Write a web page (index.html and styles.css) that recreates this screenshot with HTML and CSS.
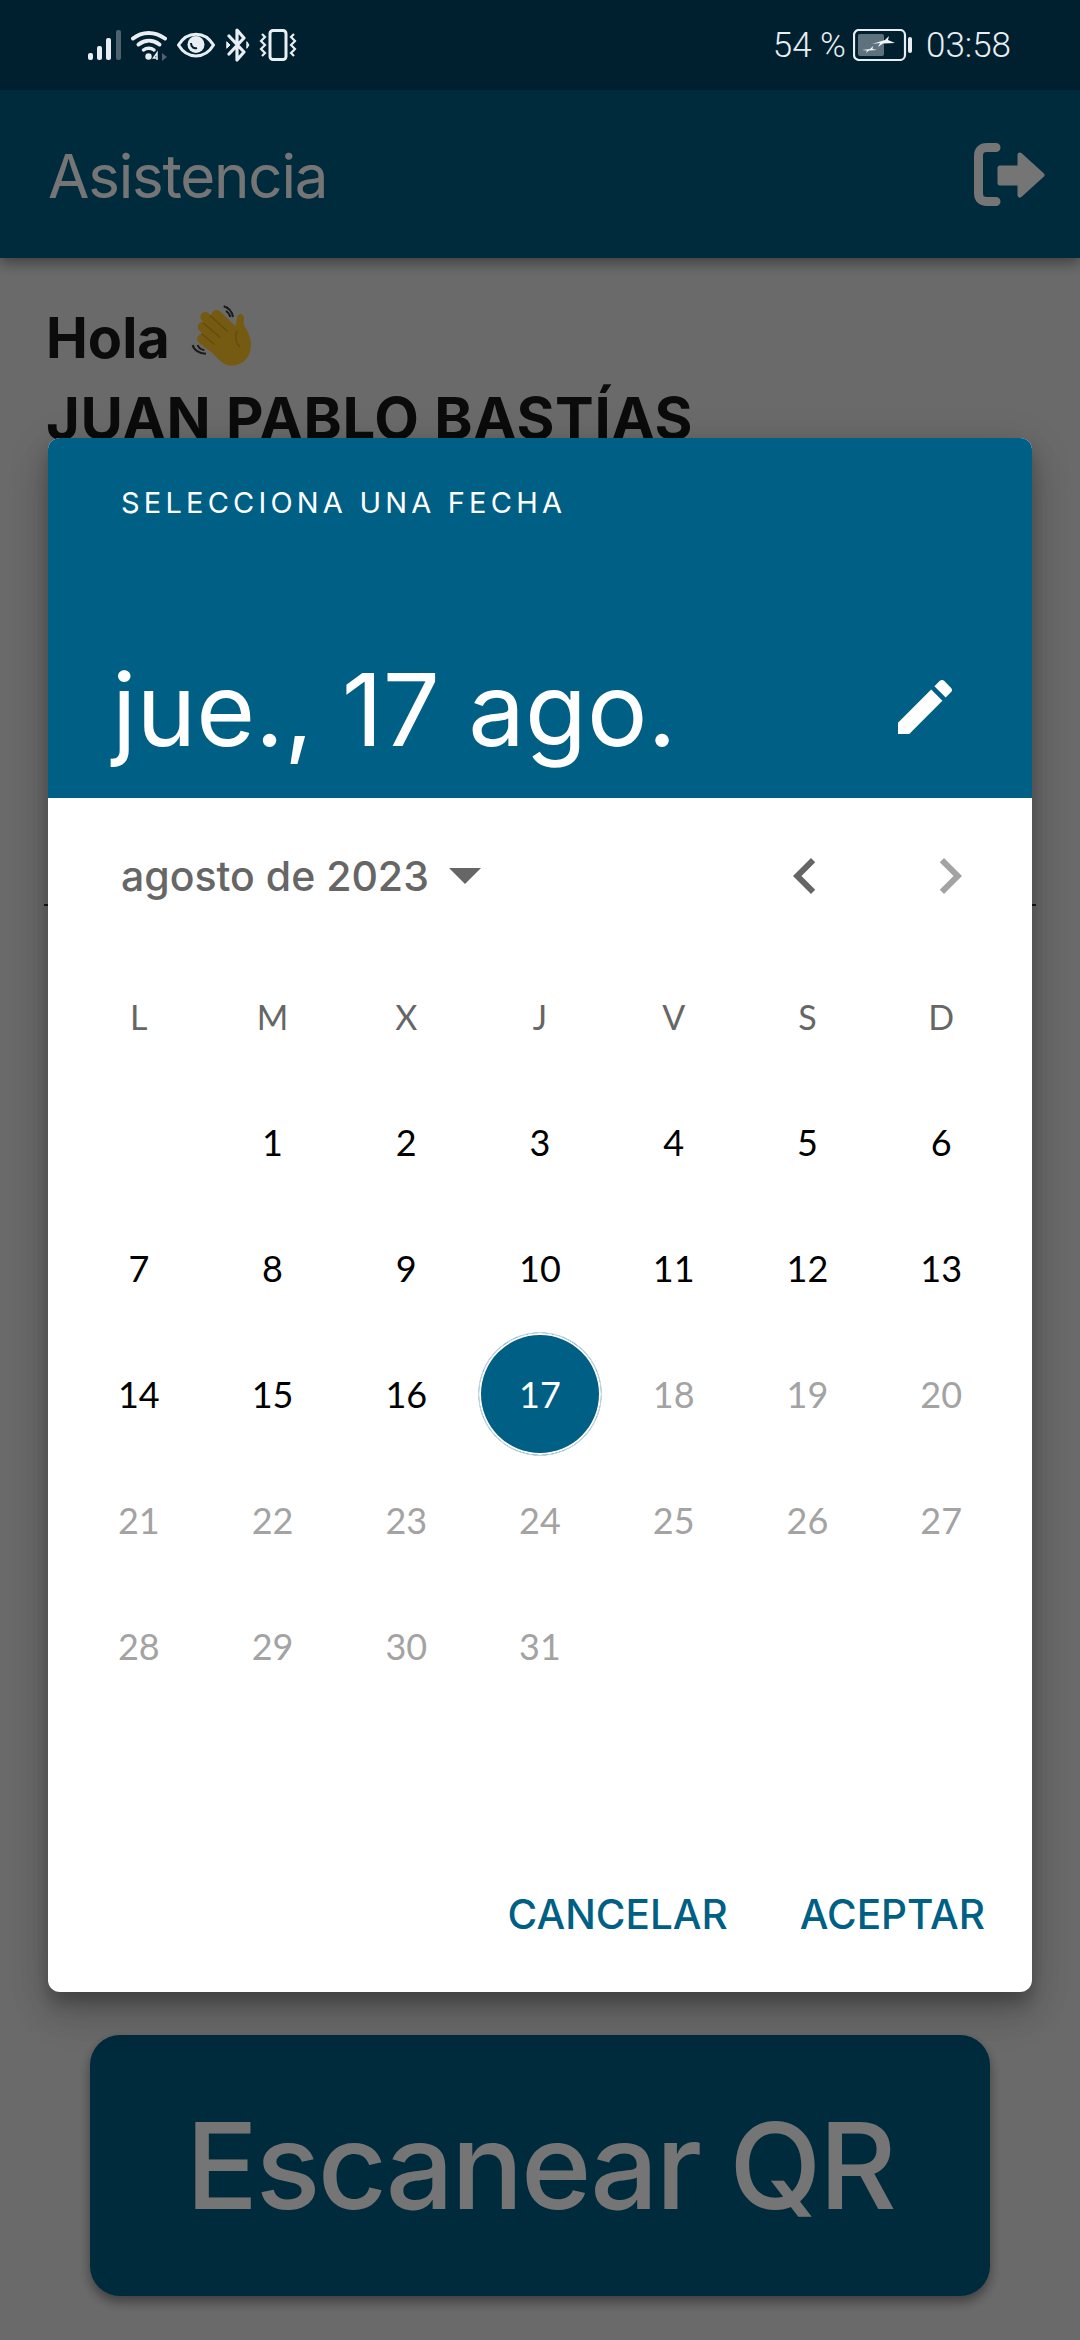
FILE: index.html
```html
<!DOCTYPE html>
<html lang="es">
<head>
  <meta charset="UTF-8">
  <title>Asistencia</title>
  <link rel="stylesheet" href="styles.css">
</head>
<body>
  <div class="screen">
    <div class="status-bar">
      <div class="status-left">
        <svg class="ico-signal" viewBox="0 0 34 30" width="34" height="30">
          <rect x="0" y="23" width="5" height="7" rx="2" fill="#e8eef1"/>
          <rect x="9" y="16" width="5" height="14" rx="2" fill="#e8eef1"/>
          <rect x="18" y="8" width="5" height="22" rx="2" fill="#e8eef1"/>
          <rect x="28" y="0" width="5" height="30" rx="2" fill="#4d626d"/>
        </svg>
        <svg class="ico-wifi" viewBox="0 0 36 32" width="36" height="32" fill="none">
          <path d="M2 9.500C11 2 24 2 34 9.500" stroke="#e8eef1" stroke-width="4" stroke-linecap="round"/>
          <path d="M7.500 15.500C14 10.500 22 10.500 28.500 15.500" stroke="#e8eef1" stroke-width="4" stroke-linecap="round"/>
          <path d="M12.500 21C15.500 18.500 20 18.500 23 21" stroke="#e8eef1" stroke-width="3.500" stroke-linecap="round"/>
          <circle cx="17.500" cy="27.500" r="3.200" fill="#e8eef1"/>
          <path d="M26 24l-3.500 5h3.500zM26 24v7" stroke="#e8eef1" stroke-width="1.500"/>
          <path d="M31 24v8l5-4z" fill="#4d626d"/>
        </svg>
        <svg class="ico-eye" viewBox="0 0 38 26" width="38" height="26">
          <path d="M1.500 13C10 -1.500 28 -1.500 36.500 13C28 27.500 10 27.500 1.500 13Z" fill="none" stroke="#e8eef1" stroke-width="3"/>
          <circle cx="19" cy="12.500" r="8.500" fill="#e8eef1"/>
          <path d="M14 11c0 4 3 6 6 5" fill="none" stroke="#00202f" stroke-width="2"/>
        </svg>
        <svg class="ico-bt" viewBox="0 0 24 34" width="24" height="34" fill="none" stroke="#e8eef1" stroke-width="3.200" stroke-linejoin="round" stroke-linecap="round">
          <path d="M3 8L18 24L11 32V2L18 10L3 26"/>
          <path d="M21 14l2 3-2 3z" fill="#e8eef1" stroke-width="1"/>
          <path d="M1 14l3 3-3 3z" fill="#e8eef1" stroke-width="1"/>
        </svg>
        <svg class="ico-vibrate" viewBox="0 0 38 32" width="38" height="32" fill="none" stroke="#e8eef1">
          <rect x="11" y="1.500" width="16" height="29" rx="3" stroke-width="3"/>
          <path d="M3 5l3 3-4 4 4 4-4 4 4 4-3 3" stroke-width="2.200"/>
          <path d="M35 5l-3 3 4 4-4 4 4 4-4 4 3 3" stroke-width="2.200"/>
        </svg>
      </div>
      <div class="status-right">
        <span class="status-text">54 %</span>
        <svg class="ico-battery" viewBox="0 0 60 32" width="60" height="32">
          <rect x="1" y="1" width="51" height="30" rx="5" fill="none" stroke="#e8eef1" stroke-width="2.200"/>
          <rect x="5" y="5" width="26" height="22" rx="2" fill="#5e727d"/>
          <rect x="55" y="8" width="4" height="16" rx="2" fill="#e8eef1"/>
          <path d="M19 15L32 11L36 7L35 11L42 14L30 14.500L25 18L27 14Z" fill="#f2f5f6"/>
          <path d="M9 21L17 20L20 17L19.500 20L24 21L16 21.500L13 24L14 21.500Z" fill="#f2f5f6"/>
        </svg>
        <span class="status-text">03:58</span>
      </div>
    </div>

    <header class="app-bar">
      <h1 class="app-title">Asistencia</h1>
      <svg class="logout" viewBox="0 0 72 63" width="72" height="63">
        <path d="M22 4.500H13Q4.500 4.500 4.500 13V50Q4.500 58.500 13 58.500H22" fill="none" stroke="#fff" stroke-width="9" stroke-linecap="round"/>
        <path d="M26 25H46V12L68 32L46 52V40H26Z" fill="#fff" stroke="#fff" stroke-width="5" stroke-linejoin="round"/>
      </svg>
    </header>

    <main class="content">
      <div class="greeting">
        <div class="hello">Hola
          <svg class="wave" viewBox="0 0 270 240" width="90" height="80">
            <g fill="none" stroke="#ffc427" stroke-width="30" stroke-linecap="round">
              <path d="M103 66L170 125"/>
              <path d="M136 60L195 115"/>
              <path d="M95 96L160 150"/>
              <path d="M93 132L150 175"/>
            </g>
            <path d="M190 110L198 70C200 52 218 54 219 70L218 88C232 112 244 136 239 163C234 194 208 214 178 212C150 208 130 180 110 155L160 90Z" fill="#ffc427"/>
            <g fill="none" stroke="#d9a21f" stroke-width="4" stroke-linecap="round">
              <path d="M118 62L168 108"/>
              <path d="M97 84L146 126"/>
              <path d="M92 116L130 148"/>
              <path d="M198 108C190 125 195 145 206 155"/>
            </g>
            <path d="M158 34C172 38 183 50 186 66M165 48C172 52 176 58 178 66" fill="none" stroke="#3a3a3a" stroke-width="6"/>
            <path d="M65 150C68 164 84 176 105 176M80 150C83 158 90 164 100 165" fill="none" stroke="#3a3a3a" stroke-width="6"/>
          </svg>
        </div>
        <div class="student-name">JUAN PABLO BASTÍAS</div>
      </div>
      <hr class="divider">
      <button class="scan-btn" type="button">Escanear QR</button>
    </main>

    <div class="scrim"></div>

    <section class="dialog">
      <div class="dialog-head">
        <div class="dialog-label">SELECCIONA UNA FECHA</div>
        <div class="dialog-date-row">
          <div class="dialog-date">jue., 17 ago.</div>
          <svg class="edit" viewBox="0 0 24 24" width="72" height="72">
            <path fill="#fff" d="M3 17.250V21h3.750L17.810 9.940l-3.750-3.750L3 17.250zM20.710 7.040c.39-.39.39-1.020 0-1.410l-2.340-2.340c-.39-.39-1.020-.39-1.410 0l-1.830 1.830 3.750 3.750 1.830-1.830z"/>
          </svg>
        </div>
      </div>

      <div class="month-row">
        <span class="month-name">agosto de 2023</span>
        <svg class="month-caret" viewBox="0 0 32 16" width="32" height="16"><path d="M0 0h32L16 16z" fill="#666"/></svg>
        <div class="month-nav">
          <svg viewBox="0 0 24 24" width="72" height="72"><path fill="#666" d="M15.410 7.410L14 6l-6 6 6 6 1.410-1.410L10.830 12z"/></svg>
          <svg viewBox="0 0 24 24" width="72" height="72"><path fill="#a3a3a3" d="M8.590 16.590L10 18l6-6-6-6-1.410 1.410L13.170 12z"/></svg>
        </div>
      </div>

      <div class="calendar">
        <span class="wd">L</span><span class="wd">M</span><span class="wd">X</span><span class="wd">J</span><span class="wd">V</span><span class="wd">S</span><span class="wd">D</span>
        <span class="day"></span><span class="day">1</span><span class="day">2</span><span class="day">3</span><span class="day">4</span><span class="day">5</span><span class="day">6</span>
        <span class="day">7</span><span class="day">8</span><span class="day">9</span><span class="day">10</span><span class="day">11</span><span class="day">12</span><span class="day">13</span>
        <span class="day">14</span><span class="day">15</span><span class="day">16</span><span class="day selected"><b>17</b></span><span class="day off">18</span><span class="day off">19</span><span class="day off">20</span>
        <span class="day off">21</span><span class="day off">22</span><span class="day off">23</span><span class="day off">24</span><span class="day off">25</span><span class="day off">26</span><span class="day off">27</span>
        <span class="day off">28</span><span class="day off">29</span><span class="day off">30</span><span class="day off">31</span>
      </div>

      <div class="dialog-actions">
        <button class="text-btn" type="button">CANCELAR</button>
        <button class="text-btn" type="button">ACEPTAR</button>
      </div>
    </section>
  </div>
</body>
</html>
```

FILE: styles.css
```css
* {
  box-sizing: border-box;
}
html, body {
  margin: 0;
  padding: 0;
}
body {
  font-family: Inter, "Noto Sans", sans-serif;
  background: #e8e8e8;
}
.screen {
  position: relative;
  width: 1080px;
  height: 2340px;
  display: flex;
  flex-direction: column;
  overflow: hidden;
}

/* status bar sits over the scrim */
.status-bar {
  position: relative;
  z-index: 3;
  height: 90px;
  flex: none;
  background: #00202f;
  color: #e8eef1;
  display: flex;
  justify-content: space-between;
  align-items: center;
  padding: 0 69px 0 88px;
}
.status-left, .status-right {
  display: flex;
  align-items: center;
}
.ico-signal { margin-right: 9px; }
.ico-wifi { margin-right: 10px; }
.ico-eye { margin-right: 11px; }
.ico-bt { margin-right: 9px; }
.status-text {
  font-family: Roboto, sans-serif;
  font-size: 35px;
  font-weight: 300;
}
.ico-battery {
  margin: 0 13px 0 7px;
}

.app-bar {
  height: 168px;
  flex: none;
  background: #005f85;
  color: #fff;
  display: flex;
  justify-content: space-between;
  align-items: center;
  padding: 0 34px 0 48px;
  box-shadow: 0 4px 14px rgba(0,0,0,0.45);
}
.app-title {
  margin: 4px 0 0;
  font-size: 60px;
  font-weight: 400;
  letter-spacing: -1.2px;
}

.content {
  flex: 1;
  display: flex;
  flex-direction: column;
  padding: 0 44px 44px;
}
.greeting {
  padding: 40px 2px 0;
  font-size: 56px;
  font-weight: 700;
  color: #1a1a1a;
  line-height: 80px;
}
.hello {
  display: flex;
  align-items: center;
  gap: 1px;
}
.wave {
  margin-top: -6px;
}
.student-name {
  font-size: 58px;
  letter-spacing: 0.7px;
}
.divider {
  margin: 446px 0 0;
  border: none;
  height: 2px;
  background: #333;
}
.scan-btn {
  align-self: center;
  margin-top: auto;
  width: 900px;
  height: 261px;
  border: none;
  border-radius: 30px;
  background: #005f85;
  color: #fff;
  font-family: Inter, sans-serif;
  font-size: 120px;
  font-weight: 500;
  letter-spacing: -2.5px;
  box-shadow: 0 6px 12px rgba(0,0,0,0.4);
}

.scrim {
  position: absolute;
  inset: 0;
  z-index: 1;
  background: rgba(0,0,0,0.54);
}

.dialog {
  position: absolute;
  z-index: 2;
  left: 48px;
  top: 438px;
  width: 984px;
  height: 1554px;
  display: flex;
  flex-direction: column;
  background: #fff;
  border-radius: 12px;
  overflow: hidden;
  box-shadow: 0 24px 38px rgba(0,0,0,0.14), 0 9px 46px rgba(0,0,0,0.12), 0 11px 15px rgba(0,0,0,0.2);
}
.dialog-head {
  height: 360px;
  flex: none;
  background: #005f85;
  color: #fff;
  padding: 45px 71px 0 73px;
}
.dialog-label {
  font-size: 29px;
  letter-spacing: 4.2px;
  line-height: 40px;
}
.dialog-date-row {
  display: flex;
  justify-content: space-between;
  align-items: center;
  margin-top: 121px;
}
.dialog-date {
  font-size: 101px;
  line-height: 130px;
  margin-left: -9px;
}
.edit {
  margin-top: -4px;
}

.month-row {
  height: 155px;
  flex: none;
  display: flex;
  align-items: center;
  padding: 0 46px 0 73px;
}
.month-name {
  font-size: 41px;
  font-weight: 500;
  color: #666;
}
.month-caret {
  margin-left: 20px;
}
.month-nav {
  margin-left: auto;
  display: flex;
  gap: 73px;
}

.calendar {
  display: grid;
  grid-template-columns: repeat(7, 1fr);
  grid-auto-rows: 126px;
  width: 936px;
  margin-left: 24px;
  flex: none;
  font-family: Lato, sans-serif;
}
.wd, .day {
  display: flex;
  align-items: center;
  justify-content: center;
  font-size: 36px;
}
.wd {
  color: #666;
  font-size: 34px;
}
.day {
  color: #000;
}
.day.off {
  color: #a3a3a3;
}
.day.selected b {
  width: 124px;
  height: 124px;
  flex: none;
  display: flex;
  align-items: center;
  justify-content: center;
  border-radius: 50%;
  background: #005f85;
  border: 1px solid #c9dbe3;
  box-shadow: inset 0 0 0 2px #fff;
  color: #fff;
  font-weight: 400;
}

.dialog-actions {
  margin-top: auto;
  height: 156px;
  display: flex;
  justify-content: flex-end;
  align-items: center;
  gap: 72px;
  padding-right: 47px;
}
.text-btn {
  padding: 0;
  border: none;
  background: none;
  color: #005f85;
  font-family: Inter, sans-serif;
  font-size: 40.5px;
  font-weight: 500;
}
```
